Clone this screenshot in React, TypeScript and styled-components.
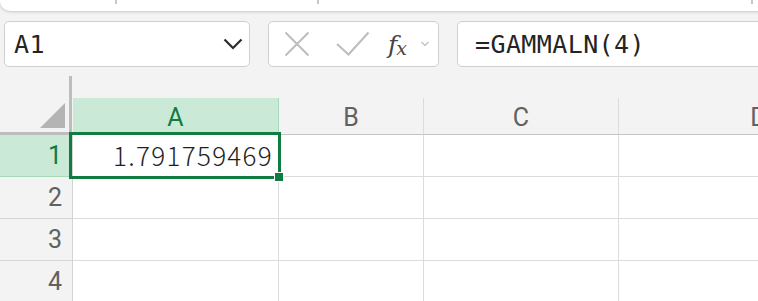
import React from "react";
import styled, { createGlobalStyle } from "styled-components";

const Global = createGlobalStyle`
  html, body { margin: 0; padding: 0; }
  body {
    background: #f3f3f3;
    width: 758px;
    height: 301px;
    overflow: hidden;
    font-family: Roboto, "Liberation Sans", sans-serif;
  }
`;

const Page = styled.div`
  width: 758px;
  height: 301px;
  overflow: hidden;
  background: #f3f3f3;
`;

const Ribbon = styled.div`
  height: 11px;
  width: 800px;
  background: #ffffff;
  border-bottom-left-radius: 10px;
  box-shadow: 0 1px 3px rgba(0, 0, 0, 0.18);
  display: flex;
  align-items: flex-start;
`;

const RibbonGroup = styled.div<{ $w: number }>`
  width: ${(p) => p.$w}px;
  height: 4px;
  box-sizing: border-box;
  border-right: 2px solid #c8c8c8;
  flex: none;
`;

const FormulaRow = styled.div`
  display: flex;
  gap: 18px;
  margin-top: 10px;
  padding-left: 4px;
  height: 46px;
`;

const Box = styled.div`
  box-sizing: border-box;
  height: 46px;
  background: #ffffff;
  border: 1.5px solid #cfcfcf;
  border-radius: 5px;
  display: flex;
  align-items: center;
  flex: none;
`;

const NameBox = styled(Box)`
  width: 246px;
  padding: 0 6px 0 9px;
  justify-content: space-between;
`;

const MonoText = styled.span`
  font-family: "DejaVu Sans Mono", "Liberation Mono", monospace;
  font-size: 25px;
  letter-spacing: 0.4px;
  color: #242424;
`;

const IconBox = styled(Box)`
  width: 171px;
  padding-left: 15px;
  gap: 0;
`;

const FxLabel = styled.span`
  font-family: "DejaVu Serif", "Liberation Serif", serif;
  font-style: italic;
  font-size: 25px;
  color: #454545;
  margin-left: 18px;
  display: flex;
  align-items: baseline;
  line-height: 1;
  i {
    font-style: italic;
  }
  sub {
    font-size: 19px;
    vertical-align: baseline;
    margin-left: -1px;
    position: relative;
    top: 2px;
  }
`;

const FormulaBox = styled(Box)`
  width: 340px;
  padding-left: 17px;
`;

const Grid = styled.div`
  margin-top: 9px;
  display: grid;
  grid-template-columns: 73px 206px 145px 195px 280px;
  grid-template-rows: 59px repeat(4, 42px);
`;

const Corner = styled.div`
  box-sizing: border-box;
  border-right: 3px solid #bdbdbd;
  border-bottom: 3px solid #bdbdbd;
  margin-right: 1px;
  display: flex;
  align-items: flex-end;
  justify-content: flex-end;
  padding: 0 4px 4px 0;
`;

const ColHeader = styled.div<{ $sel?: boolean }>`
  align-self: end;
  height: 37px;
  box-sizing: border-box;
  border-right: 1px solid ${(p) => (p.$sel ? "#a9d9bb" : "#dcdcdc")};
  border-bottom: 1px solid #c4c4c4;
  background: ${(p) => (p.$sel ? "#cae9d6" : "transparent")};
  color: ${(p) => (p.$sel ? "#107c41" : "#616161")};
  font-size: 25px;
  display: flex;
  align-items: center;
  justify-content: center;
  padding-top: 2px;
`;

const RowHeader = styled.div<{ $sel?: boolean }>`
  box-sizing: border-box;
  border-right: 1px solid #d3d3d3;
  border-bottom: 1px solid ${(p) => (p.$sel ? "#a9d9bb" : "#d6d6d6")};
  background: ${(p) => (p.$sel ? "#cae9d6" : "transparent")};
  color: ${(p) => (p.$sel ? "#107c41" : "#616161")};
  font-size: 25px;
  display: flex;
  align-items: center;
  justify-content: flex-end;
  padding-right: 10px;
`;

const Cell = styled.div`
  position: relative;
  box-sizing: border-box;
  background: #ffffff;
  border-right: 1px solid #dcdcdc;
  border-bottom: 1px solid #dcdcdc;
  display: flex;
  align-items: center;
  justify-content: flex-end;
  padding-right: 6px;
`;

const Value = styled.span`
  font-family: "Noto Sans CJK JP", "Noto Sans", sans-serif;
  font-size: 26px;
  letter-spacing: 1.3px;
  color: #1f1f1f;
  font-weight: 300;
  margin-top: -3px;
  margin-right: -1px;
`;

const Selection = styled.div`
  position: absolute;
  z-index: 3;
  left: -4px;
  top: -3px;
  right: -3px;
  bottom: -3px;
  border: 3px solid #107c41;
  pointer-events: none;
`;

const FillHandle = styled.div`
  position: absolute;
  z-index: 4;
  right: -6px;
  bottom: -6px;
  width: 8px;
  height: 8px;
  background: #107c41;
  border: 1px solid #ffffff;
`;

const XIcon = () => (
  <svg width="26" height="26" viewBox="0 0 26 26" fill="none">
    <path d="M1.5 1.5 L24.5 24.5 M24.5 1.5 L1.5 24.5" stroke="#bdbdbd" strokeWidth="2" />
  </svg>
);

const CheckIcon = () => (
  <svg width="34" height="26" viewBox="0 0 34 26" fill="none" style={{ marginLeft: 26 }}>
    <path d="M1 13 L12.5 23.5 L32.5 1.5" stroke="#bdbdbd" strokeWidth="2" />
  </svg>
);

const SmallChevron = () => (
  <svg width="8" height="6" viewBox="0 0 8 6" fill="none" style={{ marginLeft: 14 }}>
    <path d="M0.5 1 L4 4.5 L7.5 1" stroke="#bdbdbd" strokeWidth="1.2" />
  </svg>
);

const Chevron = () => (
  <svg width="20" height="12" viewBox="0 0 20 12" fill="none">
    <path d="M1.5 1.5 L10 10 L18.5 1.5" stroke="#2b2b2b" strokeWidth="2.2" />
  </svg>
);

const Triangle = () => (
  <svg width="25" height="25" viewBox="0 0 25 25">
    <path d="M25 0 L25 25 L0 25 Z" fill="#b4b4b4" />
  </svg>
);

const cols = ["A", "B", "C", "D"];

export default function App() {
  return (
    <Page>
      <Global />
      <Ribbon>
        <RibbonGroup $w={117} />
        <RibbonGroup $w={202} />
        <RibbonGroup $w={434} />
      </Ribbon>
      <FormulaRow>
        <NameBox>
          <MonoText>A1</MonoText>
          <Chevron />
        </NameBox>
        <IconBox>
          <XIcon />
          <CheckIcon />
          <FxLabel>
            <i>f</i>
            <sub>x</sub>
          </FxLabel>
          <SmallChevron />
        </IconBox>
        <FormulaBox>
          <MonoText>=GAMMALN(4)</MonoText>
        </FormulaBox>
      </FormulaRow>
      <Grid>
        <Corner>
          <Triangle />
        </Corner>
        {cols.map((c) => (
          <ColHeader key={c} $sel={c === "A"}>
            {c}
          </ColHeader>
        ))}
        {[1, 2, 3, 4].map((r) => (
          <React.Fragment key={r}>
            <RowHeader $sel={r === 1}>{r}</RowHeader>
            {cols.map((c) => (
              <Cell key={c}>
                {r === 1 && c === "A" && (
                  <>
                    <Value>1.791759469</Value>
                    <Selection />
                    <FillHandle />
                  </>
                )}
              </Cell>
            ))}
          </React.Fragment>
        ))}
      </Grid>
    </Page>
  );
}
